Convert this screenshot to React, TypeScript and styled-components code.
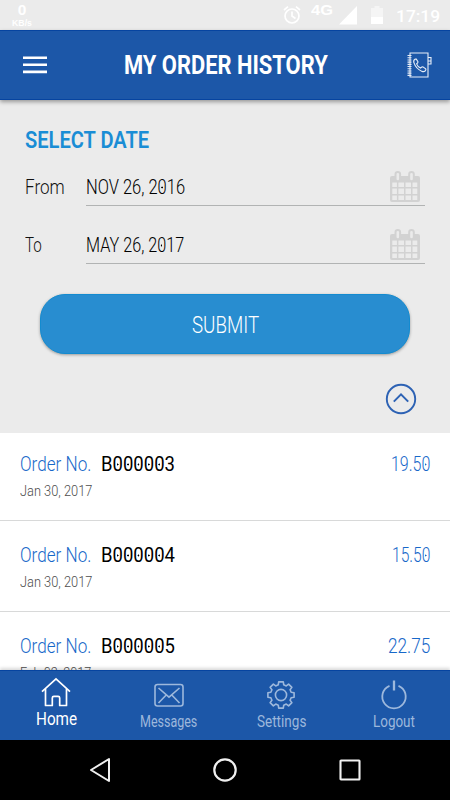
import React, { useLayoutEffect, useRef, useState } from 'react';
import styled, { createGlobalStyle } from 'styled-components';

const GlobalStyle = createGlobalStyle`
  * { box-sizing: border-box; }
  body { margin: 0; background: #ebebeb; font-family: Roboto, 'Liberation Sans', sans-serif; }
  svg { display: block; flex: none; }
`;

const Screen = styled.div`
  display: flex;
  flex-direction: column;
  width: 450px;
  height: 800px;
  overflow: hidden;
  background: #ebebeb;
`;

const Slot = styled.span<{ $width: number }>`
  display: block;
  flex: none;
  width: ${(p) => p.$width}px;
`;

const Run = styled.span`
  display: inline-block;
  white-space: pre;
  transform-origin: 0 50%;
`;

const Zero = styled.span`
  background: radial-gradient(circle at 50% 52%, currentColor 0.6px, transparent 1.3px);
`;

/* Condenses one line of text to the given width. */
function Condensed({ text, width, dotted }: { text: string; width: number; dotted?: boolean }) {
  const ref = useRef<HTMLSpanElement>(null);
  const [scale, setScale] = useState(1);
  useLayoutEffect(() => {
    if (ref.current) setScale(width / ref.current.offsetWidth);
  }, [text, width]);
  return (
    <Slot $width={width}>
      <Run ref={ref} style={{ transform: `scaleX(${scale})` }}>
        {dotted
          ? text.split(/(0)/).map((part, i) => (part === '0' ? <Zero key={i}>0</Zero> : part))
          : text}
      </Run>
    </Slot>
  );
}

const StatusBar = styled.div`
  display: flex;
  flex: none;
  height: 30px;
  padding: 0 10px 0 11px;
  color: #fff;
`;

const Speed = styled.div`
  width: 22px;
  margin-right: auto;
  padding-top: 1px;
  font: bold 15.5px/18px 'Liberation Sans', sans-serif;
  text-align: center;
`;

const SpeedUnit = styled.div`
  font-size: 8.7px;
  line-height: 10px;
  margin-top: -1px;
`;

const Network = styled.div`
  margin: 1px 6px 0 10px;
  font: bold 15px/18px 'Liberation Sans', sans-serif;
`;

const Clock = styled.div`
  margin-left: 13px;
  padding-top: 1px;
  font-size: 17px;
  font-weight: 500;
  line-height: 30px;
`;

const Header = styled.header`
  position: relative;
  z-index: 1;
  display: flex;
  flex: none;
  align-items: center;
  justify-content: space-between;
  height: 70px;
  padding: 0 17px 0 23px;
  border-top: 1px solid #0644a0;
  border-bottom: 1px solid #0644a0;
  background: #1c57a8;
  color: #fff;
  box-shadow: 0 2px 4px rgba(0, 0, 0, 0.35);
`;

const Title = styled.h1`
  margin: 2px 2px 0 0;
  font-size: 25px;
  font-weight: 700;
  line-height: 68px;
`;

const Filter = styled.section`
  display: flex;
  flex: none;
  flex-direction: column;
  height: 333px;
  padding: 26px 25px 0;
`;

const Heading = styled.h2`
  margin: 0 0 17px;
  color: #1a8dd5;
  font-size: 23px;
  font-weight: 600;
  line-height: 30px;
`;

const Field = styled.div<{ $gap: number }>`
  display: flex;
  height: 33px;
  margin-bottom: ${(p) => p.$gap}px;
  color: #111;
  font-size: 20.5px;
  font-weight: 300;
  line-height: 29px;
`;

const FieldLabel = styled.div`
  width: 60px;
`;

const FieldValue = styled.div`
  display: flex;
  flex: 1;
  justify-content: space-between;
  margin-left: 1px;
  padding: 0 4px 0 0;
  border-bottom: 1px solid #b1b3b3;
  color: #000;

  svg {
    margin-top: -3px;
  }
`;

const Submit = styled.button`
  display: flex;
  align-items: center;
  justify-content: center;
  height: 60px;
  margin: 0 15px 29px;
  padding: 2px 0 0;
  border: 1px solid #138bd0;
  border-radius: 25px;
  background: #288dd0;
  box-shadow: 0 1px 3px rgba(0, 0, 0, 0.35);
  color: #fff;
  font: 300 23.5px/28px Roboto, sans-serif;
`;

const Collapse = styled.button`
  align-self: flex-end;
  margin-right: 8px;
  padding: 0;
  border: 0;
  background: none;
`;

const Orders = styled.ul`
  flex: 1;
  min-height: 0;
  margin: 0;
  padding: 0;
  overflow: hidden;
  background: #fff;
  list-style: none;
`;

const Order = styled.li`
  height: 91px;
  padding: 20px 20px 0;
  border-bottom: 1px solid #d8d9d9;

  &:first-child {
    height: 88px;
    padding-top: 17px;
  }
`;

const OrderLine = styled.div`
  display: flex;
  gap: 10px;
  height: 28px;
  color: #1768c9;
  font-size: 20.5px;
  font-weight: 300;
  line-height: 29px;
`;

const OrderId = styled.div`
  flex: 1;
  color: #000;
  font-weight: 400;
`;

const OrderDate = styled.div`
  color: #4d4d4d;
  font-size: 15.5px;
  font-weight: 300;
  line-height: 26px;
`;

const Tabs = styled.nav`
  position: relative;
  z-index: 1;
  display: grid;
  flex: none;
  grid-template-columns: repeat(4, 1fr);
  height: 70px;
  border-top: 1px solid #0644a0;
  background: #1c57a8;
  box-shadow: 0 -2px 3px rgba(0, 0, 0, 0.15);
`;

const Tab = styled.div<{ $active?: boolean }>`
  display: flex;
  flex-direction: column;
  align-items: center;
  padding-top: ${(p) => (p.$active ? 6 : 9)}px;
  color: ${(p) => (p.$active ? '#fff' : '#9db8dc')};
  font-size: ${(p) => (p.$active ? 17.5 : 16)}px;
  line-height: 24px;
`;

const SystemBar = styled.div`
  display: flex;
  flex: none;
  align-items: center;
  justify-content: center;
  gap: 101px;
  height: 60px;
  background: #000;
`;

const AlarmIcon = () => (
  <svg width="18" height="30" viewBox="0 0 18 30" fill="none" stroke="#fff" strokeWidth="1.7">
    <circle cx="9" cy="16" r="7" />
    <path d="M9 11.5V16l3.5 2.5M1 10l4-3.3M17 10l-4-3.3" />
  </svg>
);

const SignalIcon = () => (
  <svg width="18" height="30" viewBox="0 0 18 30">
    <path d="M18 6v18.5H0z" fill="#fff" />
  </svg>
);

const BatteryGap = styled.div`
  margin-left: 14px;
`;

const BatteryIcon = () => (
  <svg width="12" height="30" viewBox="0 0 12 30">
    <path d="M0 8h3.5V6h5v2H12v9H0z" fill="#f5f5f5" />
    <path d="M0 17h12v7H0z" fill="#fff" />
  </svg>
);

const MenuIcon = () => (
  <svg width="24" height="18" viewBox="0 0 24 18" fill="#fff">
    <path d="M0 .5h24V3H0zM0 7.5h24v2.6H0zM0 14.6h24v2.6H0z" />
  </svg>
);

const PhoneBookIcon = () => (
  <svg width="26" height="28" viewBox="0 0 26 28" fill="none" stroke="#e6edf7" strokeWidth="1.1">
    <path d="M3 2h18v24H3z" />
    <path d="M21 6.5h3V13h-3M21 10h3" />
    <path d="M2.5 4v21" strokeWidth="4" strokeDasharray="1.1 1.1" />
    <path d="M8.3 8.1c-1.4.8-2 2-1.4 3.6 1.4 4.3 4.2 7.1 8.2 8.7 1.7.5 3.2-.2 3.8-1.7l-.2-.9-2.9-1.9-1 .1-1.3 1c-2-.9-3.2-2.2-3.9-4.1l1.2-1.2.1-1-1.6-2.6z" />
  </svg>
);

const CalendarIcon = () => (
  <svg width="32" height="33" viewBox="0 0 32 33">
    <path
      fill="#d2d2d2"
      fillRule="evenodd"
      d="M3 6h26a2 2 0 0 1 2 2v22a2 2 0 0 1-2 2H3a2 2 0 0 1-2-2V8a2 2 0 0 1 2-2zM3.3 12.4v4.6h4.6v-4.6zM9.4 12.4v4.6H15v-4.6zM16.5 12.4v4.6H22v-4.6zM23.5 12.4v4.6h4.8v-4.6zM3.3 18.6V24h4.6v-5.4zM9.4 18.6V24H15v-5.4zM16.5 18.6V24H22v-5.4zM23.5 18.6V24h4.8v-5.4zM3.3 25.5V30h4.6v-4.5zM9.4 25.5V30H15v-4.5zM16.5 25.5V30H22v-4.5zM23.5 25.5V30h4.8v-4.5z"
    />
    <path
      fill="#ebebeb"
      stroke="#d2d2d2"
      strokeWidth="2"
      d="M6.5 9V4.2a2.3 2.3 0 0 1 4.6 0V9a2.3 2.3 0 0 1-4.6 0zM20.2 9V4.2a2.3 2.3 0 0 1 4.6 0V9a2.3 2.3 0 0 1-4.6 0z"
    />
  </svg>
);

const ChevronCircle = () => (
  <svg width="32" height="32" viewBox="0 0 32 32" fill="none" stroke="#2d62b4" strokeWidth="1.9">
    <circle cx="16" cy="16" r="14.2" />
    <path d="m8.8 18.6 7.2-7.3 7.2 7.3" strokeWidth="2" />
  </svg>
);

const HomeIcon = () => (
  <svg width="30" height="30" viewBox="0 0 30 30" fill="none" stroke="#fff" strokeWidth="1.7">
    <path d="M1 14.7 15 1.9l14 12.8" />
    <path d="M4.5 12v16.5h6.8V21c0-1 .6-1.6 1.6-1.6h4.2c1 0 1.6.6 1.6 1.6v7.5h6.8V12" strokeLinejoin="round" />
  </svg>
);

const MailIcon = () => (
  <svg width="30" height="30" viewBox="0 0 30 30" fill="none" stroke="currentColor" strokeWidth="1.6">
    <rect x="1" y="4.5" width="28" height="21.5" rx="2.5" />
    <path d="m4.5 8 10.5 9.2L25.5 8M4.5 23l7.7-8M25.5 23l-7.7-8" />
  </svg>
);

const gearPath = (() => {
  const points: string[] = [];
  for (let i = 0; i < 8; i += 1) {
    [[-15, 10.5], [-10, 13.3], [10, 13.3], [15, 10.5]].forEach(([offset, radius]) => {
      const a = ((i * 45 + offset) * Math.PI) / 180;
      points.push(`${(15 + Math.sin(a) * radius).toFixed(2)} ${(15 - Math.cos(a) * radius).toFixed(2)}`);
    });
  }
  return `M${points.join('L')}Z`;
})();

const GearIcon = () => (
  <svg width="30" height="30" viewBox="0 0 30 30" fill="none" stroke="currentColor" strokeWidth="1.6" strokeLinejoin="round">
    <path d={gearPath} />
    <circle cx="15" cy="15" r="5.6" />
  </svg>
);

const PowerIcon = () => (
  <svg width="30" height="30" viewBox="0 0 30 30" fill="none" stroke="currentColor" strokeWidth="1.8">
    <path d="M10.5 5.8a11.7 11.7 0 1 0 9 0" />
    <path d="M15 .5v10" strokeWidth="2.3" />
  </svg>
);

const BackIcon = () => (
  <svg width="24" height="26" viewBox="0 0 24 26" fill="none" stroke="#f0f0f0" strokeWidth="2" strokeLinejoin="round">
    <path d="M21 2v22L3 13z" />
  </svg>
);

const CircleIcon = () => (
  <svg width="24" height="26" viewBox="0 0 24 26" fill="none" stroke="#f0f0f0" strokeWidth="2.2">
    <circle cx="12" cy="13" r="10.7" />
  </svg>
);

const SquareIcon = () => (
  <svg width="24" height="26" viewBox="0 0 24 26" fill="none" stroke="#f0f0f0" strokeWidth="2.1">
    <rect x="2.5" y="3.5" width="19" height="19" rx="0.5" />
  </svg>
);

const orders = [
  { id: 'B000003', date: 'Jan 30, 2017', dateWidth: 72, amount: '19.50', amountWidth: 39 },
  { id: 'B000004', date: 'Jan 30, 2017', dateWidth: 72, amount: '15.50', amountWidth: 38 },
  { id: 'B000005', date: 'Feb 02, 2017', dateWidth: 71, amount: '22.75', amountWidth: 42 },
];

export default function App() {
  return (
    <>
      <GlobalStyle />
      <Screen>
        <StatusBar>
          <Speed>
            0<SpeedUnit>KB/s</SpeedUnit>
          </Speed>
          <AlarmIcon />
          <Network><Condensed text="4G" width={22} /></Network>
          <SignalIcon />
          <BatteryGap><BatteryIcon /></BatteryGap>
          <Clock><Condensed text="17:19" width={44} /></Clock>
        </StatusBar>
        <Header>
          <MenuIcon />
          <Title><Condensed text="MY ORDER HISTORY" width={204} /></Title>
          <PhoneBookIcon />
        </Header>
        <Filter>
          <Heading><Condensed text="SELECT DATE" width={124} /></Heading>
          <Field $gap={25}>
            <FieldLabel><Condensed text="From" width={40} /></FieldLabel>
            <FieldValue>
              <Condensed text="NOV 26, 2016" width={99} dotted />
              <CalendarIcon />
            </FieldValue>
          </Field>
          <Field $gap={30}>
            <FieldLabel><Condensed text="To" width={17} /></FieldLabel>
            <FieldValue>
              <Condensed text="MAY 26, 2017" width={98} dotted />
              <CalendarIcon />
            </FieldValue>
          </Field>
          <Submit><Condensed text="SUBMIT" width={67} /></Submit>
          <Collapse aria-label="Collapse"><ChevronCircle /></Collapse>
        </Filter>
        <Orders>
          {orders.map((order) => (
            <Order key={order.id}>
              <OrderLine>
                <Condensed text="Order No." width={71} />
                <OrderId><Condensed text={order.id} width={74} dotted /></OrderId>
                <Condensed text={order.amount} width={order.amountWidth} dotted />
              </OrderLine>
              <OrderDate><Condensed text={order.date} width={order.dateWidth} /></OrderDate>
            </Order>
          ))}
        </Orders>
        <Tabs>
          <Tab $active><HomeIcon /><Condensed text="Home" width={41} /></Tab>
          <Tab><MailIcon /><Condensed text="Messages" width={57} /></Tab>
          <Tab><GearIcon /><Condensed text="Settings" width={49} /></Tab>
          <Tab><PowerIcon /><Condensed text="Logout" width={42} /></Tab>
        </Tabs>
        <SystemBar>
          <BackIcon />
          <CircleIcon />
          <SquareIcon />
        </SystemBar>
      </Screen>
    </>
  );
}
